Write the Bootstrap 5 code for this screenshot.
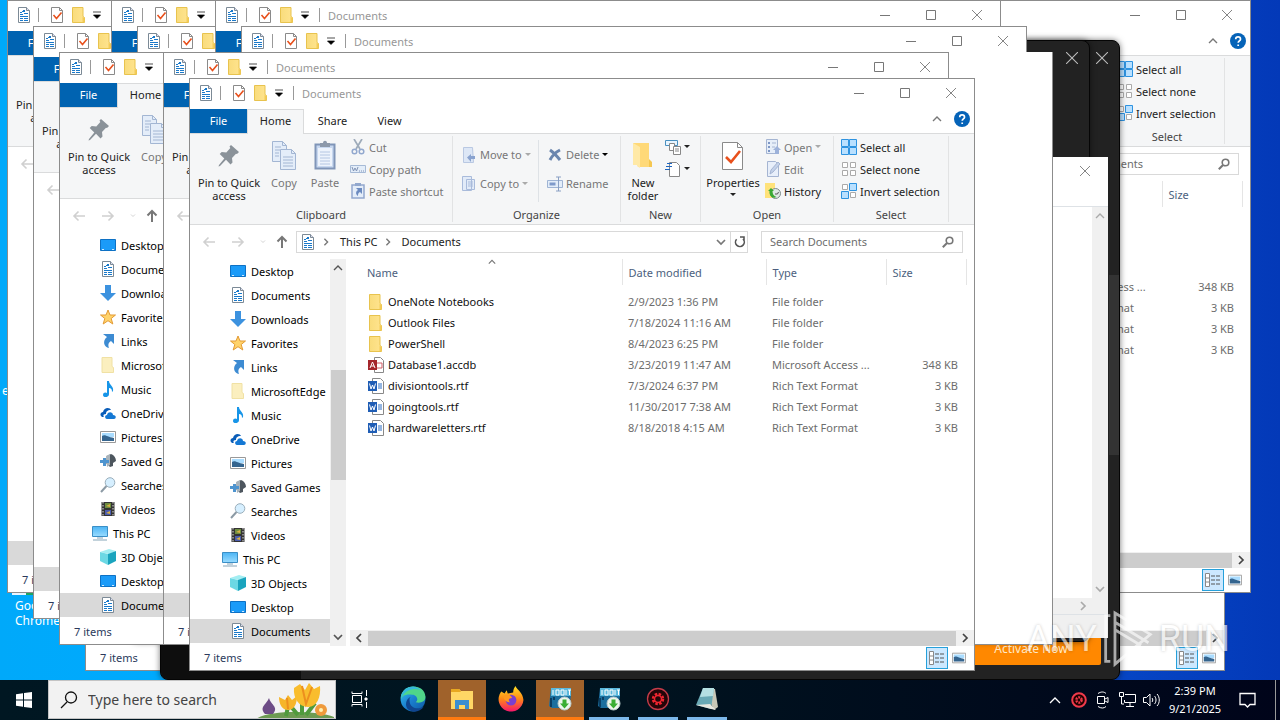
<!DOCTYPE html>
<html lang="en">
<head>
<meta charset="utf-8">
<meta name="viewport" content="width=device-width, initial-scale=1">
<title>Desktop</title>
<link href="https://cdn.jsdelivr.net/npm/bootstrap@5.3.0/dist/css/bootstrap.min.css" rel="stylesheet">
<style>
body{font-family:"Noto Sans","Open Sans",sans-serif;font-size:11px;line-height:13px;color:#222;height:100vh;background:#000}
button,input{font:inherit;color:inherit;background:none;border:0;padding:0}
svg{display:block;flex:none}
.desk{background:linear-gradient(90deg,#00a9fa 0,#00aaff 15%,#0645c4 88%,#0339b8 100%)}
.win{position:absolute;background:#fff;border:1px solid #8c8c8c}
.explorer{width:786px;height:593px}
.s16{width:16px;height:16px}.s32{width:32px;height:32px}
.titlebar{height:30px;color:#979797;padding:0 0 2px 8px}
.vbar{width:1px;height:14px;background:#999}
.qat{gap:6px}
.winbtn{width:46px;height:28px;display:flex;align-items:center;justify-content:center;color:#777}
.tabs{height:24px}
.tabs button{width:57px;height:24px;padding-bottom:2px}
.tabs .file{background:#0063b1;color:#fff;width:57px}
.tabs .home{background:#f5f6f7;border:1px solid #dadbdc;border-bottom:0;height:25px;position:relative}
.ribbon{background:#f5f6f7;border-top:1px solid #dadbdc;border-bottom:1px solid #dadbdc;height:92px}
.grp{border-right:1px solid #e2e3e4;margin:2px 0 3px;height:86px;display:flex;flex-direction:column;justify-content:space-between}
.grp .cap{text-align:center;color:#444;height:14px}
.grp .acts{height:66px}
.big{display:flex;flex-direction:column;align-items:center;padding-top:4px;height:66px;white-space:nowrap}
.big svg{margin-bottom:4px}
.line{display:flex;align-items:center;gap:3px;height:22px;white-space:nowrap}
.tall .line{height:29px}
.dim{color:#777}
.g1{width:263px}.g2{width:168px}.g3{width:80px}.g4{width:133px}.g5{width:115px}
.g5 .acts{padding-left:7px}
.navrow{height:33px;color:#777}
.back{margin-left:12px}
.fwd,.recent{margin-left:15px}
.upb{margin-left:10px}
.box{border:1px solid #d9d9d9;height:22px;color:#222}
.addr{width:435px;gap:6px;padding-left:3px}
.refresh{width:17px;padding-left:3px}
.search{width:202px;margin-right:11px}
.search input{width:160px;outline:0}
.search input::placeholder{color:#6d6d6d;opacity:1}
.below{height:388px;padding-top:1px}
.tree{width:140px;list-style:none;margin:0;padding:0;color:#000;overflow:hidden;white-space:nowrap}
.tree li{height:24px;padding-left:40px;display:flex;align-items:center}
.tree li.root{padding-left:32px}
.tree li.on{background:#d9d9d9}
.tree span{display:flex;gap:5px;align-items:center}
.vs{width:16px;background:#f0f0f0;color:#555}
.vs .thumb{background:#cdcdcd;height:110px;margin-top:94px;width:15px}
.files{table-layout:fixed;width:620px;border-collapse:collapse;white-space:nowrap;color:#6d6d6d}
.files th{font-weight:400;color:#4c5f7e;height:26px;border-right:1px solid #e5e5e5;padding:0 0 0 6px}
.files td{height:21px;padding:0 0 0 6px}
.files td:first-child,.files th:first-child{padding-left:21px}
.files td:first-child{color:#111}
.files td:first-child span{gap:4px;padding-left:1px}
.files tbody:before{content:"";display:block;height:6px}
.files td:last-child{text-align:right;padding-right:8px}
.sortmark{left:141px;top:-1px}
.hs{height:16px;background:#f0f0f0;color:#444}
.hs .thumb{background:#cdcdcd;height:15px}
.status{height:23px;color:#2b3a5c;padding-left:14px}
.views button{width:22px;height:22px;display:flex;align-items:center;justify-content:center}
.views .on{background:#cce8ff;border:1px solid #26a0da}
.dark{position:absolute;background:#222;border:1px solid #050505;border-radius:8px;box-shadow:0 0 6px #0008;overflow:hidden}
.dark .shut{color:#bbb;padding:11px 11px 0 0}
.activate{background:#f80;color:#ffe9c8;font-size:12px;line-height:16px;height:28px;width:140px;border-radius:2px;padding-bottom:8px;margin:0 18px 14px}
.note{background:#fff;color:#999}
.note .vs,.note .hs{color:#aaa}
.deskicon{position:absolute;color:#fff;text-align:center;font-size:12px;line-height:15px}
.mark-logo{position:absolute;right:50px;bottom:9px;color:#fff;opacity:.62;font:36px/60px "Liberation Sans Narrow","Roboto",sans-serif;display:flex;align-items:center;text-shadow:0 0 3px #0005;pointer-events:none}
.bar{height:40px;background:linear-gradient(90deg,#001722,#00131f 50%,#00041a);color:#fff}
.bar button{height:40px;display:flex;align-items:center;justify-content:center}
.start{width:48px}
.find{width:288px;height:39px;background:#f2f2f2;border:1px solid #c4c4c4;color:#333;padding-left:11px;gap:10px;overflow:hidden}
.find input{width:158px;font-size:14px;outline:0;flex:none}
.find input::placeholder{color:#444;opacity:1}
.app{width:48px;margin-right:1px;border-bottom:3px solid transparent!important}
.app.hot{background:#a0622b;border-color:#ff7a10!important}
.app.run{width:40px;margin:0 5px 0 4px;border-color:#7cb8ea!important}
.tray button{width:24px}
.clock{font-size:11px;line-height:18px;width:64px;text-align:center}
</style>
</head>
<body class="d-flex flex-column overflow-hidden">
<svg width="0" height="0" class="position-absolute" aria-hidden="true">
<defs>
<linearGradient id="gf" x2="1"><stop stop-color="#f9dc7c"/><stop offset="1" stop-color="#ffe48f"/></linearGradient>
<linearGradient id="gs" x2="0" y2="1"><stop stop-color="#4cb5f5"/><stop offset="1" stop-color="#9adcff"/></linearGradient>
<linearGradient id="ge" x2="1" y2="1"><stop stop-color="#35c1f1"/><stop offset=".5" stop-color="#1b80d0"/><stop offset="1" stop-color="#0c59a4"/></linearGradient>
<linearGradient id="gx" x2="0" y2="1"><stop stop-color="#ffe226"/><stop offset=".5" stop-color="#ff8a16"/><stop offset="1" stop-color="#f5156c"/></linearGradient>
</defs>
<symbol id="doc" viewBox="0 0 16 16"><path d="M2.500.5h8l3 3v12h-11z" fill="#fff" stroke="#7c8a96"/><path d="M10.500.5v3h3" fill="#dde" stroke="#7c8a96"/><path d="M4 5.500h2M7 3.500h2M6 4.500h3M4 7.500h3M8 6.500h4M4 9.500h8M4 11.500h3M8 11.500h4M4 13.500h3M8 13.500h4" stroke="#1979ca"/></symbol>
<symbol id="chk" viewBox="0 0 16 16"><path d="M2.500.5h8l3 3v12h-11z" fill="#fff" stroke="#8a8a8a"/><path d="M10.500.5v3h3" fill="none" stroke="#8a8a8a"/><path d="M4.500 8l3 3.500 5-6" fill="none" stroke="#e8501c" stroke-width="1.600"/></symbol>
<symbol id="prop" viewBox="0 0 32 32"><path d="M5.500 2.500h15l5 5v22h-20z" fill="#fff" stroke="#8a8a8a"/><path d="M20.500 2.500v5h5" fill="none" stroke="#8a8a8a"/><path d="M9 17l5 5 9-11" fill="none" stroke="#e8501c" stroke-width="2.600"/></symbol>
<symbol id="fold" viewBox="0 0 16 16"><path d="M1.500.5h10.500v9l1.500 1v5h-12z" fill="url(#gf)" stroke="#e8c34e"/><path d="M11.500 15v-5l2 1v4z" fill="#f3cb57"/></symbol>
<symbol id="pale" viewBox="0 0 16 16"><path d="M2 .5h10v9l1.500 1v5H2z" fill="#fbefbf" stroke="#f0e1a4"/></symbol>
<symbol id="qcar" viewBox="0 0 8 8"><path d="M0 1h8M0.500 4h7l-3.500 3.500z" fill="#000" stroke="#000" stroke-width=".7"/></symbol>
<symbol id="car" viewBox="0 0 6 4"><path d="M0 0h6L3 3z" fill="currentColor"/></symbol>
<symbol id="min" viewBox="0 0 10 10"><path d="M0 5.500h10" stroke="currentColor"/></symbol>
<symbol id="max" viewBox="0 0 10 10"><path d="M.5.5h9v9h-9z" fill="none" stroke="currentColor"/></symbol>
<symbol id="x" viewBox="0 0 10 10"><path d="M0 0l10 10M10 0L0 10" stroke="currentColor" stroke-width=".9"/></symbol>
<symbol id="up" viewBox="0 0 10 10"><path d="M1 7l4-4 4 4" fill="none" stroke="currentColor" stroke-width="1.400"/></symbol>
<symbol id="dn" viewBox="0 0 10 10"><path d="M1 3l4 4 4-4" fill="none" stroke="currentColor" stroke-width="1.700"/></symbol>
<symbol id="rt" viewBox="0 0 10 10"><path d="M3 1l4 4-4 4" fill="none" stroke="currentColor" stroke-width="1.700"/></symbol>
<symbol id="lf" viewBox="0 0 10 10"><path d="M7 1L3 5l4 4" fill="none" stroke="currentColor" stroke-width="1.700"/></symbol>
<symbol id="help" viewBox="0 0 16 16"><circle cx="8" cy="8" r="8" fill="#0563b8"/><path d="M5.700 6.200c0-3 4.800-3 4.800 0 0 1.700-2.300 1.800-2.300 3.600M8.200 11.500v1.500" fill="none" stroke="#fff" stroke-width="1.700"/></symbol>
<symbol id="pin" viewBox="0 0 32 32"><path d="M18 5l8 7-2 2-1-.3-4 4.300.5 4.500-2 2-4.500-4.800L7 26l-1.500.5L6 25l5.300-6.500L6.700 14l2-2 4.600.5 4-4.500-.8-1.500z" fill="#8a9299"/></symbol>
<symbol id="copy" viewBox="0 0 32 32"><g fill="#e4edf9" stroke="#a3b6d3"><path d="M4.500 1.500h10l4 4v16h-14z"/><path d="M12.500 9.500h11l4 4v16h-15z"/></g><path d="M14.500 1.500v4h4M23.500 9.500v4h4M7 7h6M7 10h5M7 13h4M7 16h4M15 17h10M15 20h10M15 23h10M15 26h10" stroke="#a3b6d3" fill="none"/></symbol>
<symbol id="paste" viewBox="0 0 32 32"><path d="M6.500 4.500h19v24h-19z" fill="#c8d8f0" stroke="#8095b8" stroke-width="2"/><path d="M9 8h14v18H9z" fill="#edf3fc"/><path d="M11 3h3c0-3 4-3 4 0h3v4H11z" fill="#8d99aa"/><path d="M11 12h10M11 15h10M11 18h10M11 21h10M11 24h10" stroke="#b4c6e2"/></symbol>
<symbol id="cut" viewBox="0 0 16 16"><path d="M4 0l6 10M12 0L6 10" stroke="#9eabba" stroke-width="1.700"/><circle cx="4.500" cy="12.500" r="2.300" fill="none" stroke="#92a8ce" stroke-width="1.500"/><circle cx="11.500" cy="12.500" r="2.300" fill="none" stroke="#92a8ce" stroke-width="1.500"/></symbol>
<symbol id="path" viewBox="0 0 16 16"><path d="M.5 4.500h15v7H.5z" fill="#e3edf9" stroke="#a6bad6"/><path d="M2 6l1.500 4L5 7l1.500 3L8 6M9 10h1m1 0h1m1 0h1" stroke="#8193b5" fill="none"/></symbol>
<symbol id="scut" viewBox="0 0 16 16"><path d="M2 2h12v13H2z" fill="#e4edf9" stroke="#92a8ce" stroke-width="1.500"/><path d="M5 0h6v3H5z" fill="#92a8ce"/><path d="M6 5h6v6l-2-2c-2 1-2 2-2 4-3-2-2-5 0-6z" fill="#6c8bc0"/></symbol>
<symbol id="move" viewBox="0 0 16 16"><path d="M2.500.5h9l1 15h-10z" fill="#dde7f6" stroke="#b9c8e2"/><path d="M14 9v3h-4v3l-4-4.500L10 7v2z" fill="#8aa3cf"/></symbol>
<symbol id="cpto" viewBox="0 0 16 16"><path d="M1.500.5h9v14h-9zM5.500 3.500h8v10h-8z" fill="#e2ebf8" stroke="#a9bbdb"/><path d="M7 6h5M7 8h5M7 10h5" stroke="#a9bbdb"/></symbol>
<symbol id="del" viewBox="0 0 16 16"><path d="M3 3c3 2 6 5 10 10M13 3C9 5 5 9 3 13" stroke="#6b86ae" stroke-width="3" fill="none"/></symbol>
<symbol id="ren" viewBox="0 0 16 16"><path d="M.5 4.500h15v7H.5z" fill="#e3edf9" stroke="#9fb4d4"/><path d="M2.500 8h6" stroke="#7f9aca" stroke-width="3"/><path d="M9 1h5M11.500 1v14M9 15h5" stroke="#8aa0c4" fill="none"/></symbol>
<symbol id="nfold" viewBox="0 0 32 32"><path d="M6 3h16v17l3 3v4H11z" fill="#ffd978"/><path d="M6 3l7 4v21l-3-2v-1H6z" fill="#ffe9a6"/><path d="M22 19l3 3v5h-3z" fill="#f5c751"/></symbol>
<symbol id="nitem" viewBox="0 0 16 16"><path d="M.5 1.500h12v5H.5z" fill="#e8f5ff" stroke="#4a90c0"/><path d="M4.500 4.500h5v7h-5z" fill="#fff" stroke="#888"/><path d="M8.500 7.500h7v8h-7zM10 10h4M10 12h4" fill="#fff" stroke="#888"/></symbol>
<symbol id="easy" viewBox="0 0 16 16"><path d="M4.500 1.500h7l3 3v11h-10z" fill="#fff" stroke="#888"/><path d="M2 2.500h5M1 5.500h6M0 8.500h5" stroke="#1f66c0"/></symbol>
<symbol id="opn" viewBox="0 0 16 16"><path d="M1.500.5h11v14h-11z" fill="#e6eef9" stroke="#a5b5d2"/><path d="M4 3v2m0 2v2m0 2v2" stroke="#7e97c5" stroke-width="2"/><path d="M7 4h4M7 8h3" stroke="#a5b5d2"/><path d="M12 7l4 4h-2v4h-4v-4H8z" fill="#9db2da"/></symbol>
<symbol id="edit" viewBox="0 0 16 16"><path d="M2.500.5h8l3 3v12h-11z" fill="#e8effa" stroke="#a5b5d2"/><path d="M5 13l1-4 7-8 2 2-7 8z" fill="#c4d2ea" stroke="#a5b5d2"/></symbol>
<symbol id="hist" viewBox="0 0 16 16"><path d="M0 0h10v15H0z" fill="#ffe27a"/><circle cx="10.500" cy="10.500" r="5" fill="#dfe9e4" stroke="#7d8b8b"/><path d="M10 11h2.500l1-2" stroke="#555" fill="none"/><path d="M3 8l3-3 3 3H7.500c0 3 1 5 4 6-4 2-7.500-1-7-6z" fill="#3ba935"/></symbol>
<symbol id="sall" viewBox="0 0 16 16"><path d="M.5.5h7v7h-7zM8.500.5h7v7h-7zM.5 8.500h7v7h-7zM8.500 8.500h7v7h-7z" fill="#b9e0ff" stroke="#2e93e0"/></symbol>
<symbol id="snone" viewBox="0 0 16 16"><path d="M1.500 1.500h5v5h-5zM9.500 1.500h5v5h-5zM1.500 9.500h5v5h-5zM9.500 9.500h5v5h-5z" fill="#fff" stroke="#aaa"/></symbol>
<symbol id="sinv" viewBox="0 0 16 16"><path d="M1.500 1.500h5v5h-5zM9.500 9.500h5v5h-5z" fill="#fff" stroke="#aaa"/><path d="M8.500.5h7v7h-7zM.5 8.500h7v7h-7z" fill="#b9e0ff" stroke="#2e93e0"/></symbol>
<symbol id="aL" viewBox="0 0 14 12"><path d="M13 6H2M6.500 1.500L2 6l4.500 4.500" fill="none" stroke="currentColor" stroke-width="1.600"/></symbol>
<symbol id="aR" viewBox="0 0 14 12"><path d="M1 6h11M7.500 1.500L12 6l-4.500 4.500" fill="none" stroke="currentColor" stroke-width="1.600"/></symbol>
<symbol id="aU" viewBox="0 0 12 14"><path d="M6 13V2M1.500 6.500L6 2l4.500 4.500" fill="none" stroke="currentColor" stroke-width="2"/></symbol>
<symbol id="ref" viewBox="0 0 12 12"><path d="M2.600 3.200A4.400 4.400 0 1 0 9 3M6 1h4v4" fill="none" stroke="currentColor" stroke-width="1.600"/></symbol>
<symbol id="mag" viewBox="0 0 12 12"><circle cx="7.500" cy="4.500" r="3.300" fill="none" stroke="currentColor" stroke-width="1.600"/><path d="M5 7L.8 11.200" stroke="currentColor" stroke-width="2"/></symbol>
<symbol id="desktop" viewBox="0 0 16 16"><path d="M.5 2.500h15v11H.5z" fill="#1b9bf8" stroke="#0e71c4"/><path d="M2 12.500h2M12 12.500h2" stroke="#cfeaff"/></symbol>
<symbol id="down" viewBox="0 0 16 16"><path d="M5 0h6v8h5l-8 8-8-8h5z" fill="#3c92df"/></symbol>
<symbol id="star" viewBox="0 0 16 16"><path d="M8 1l2 5h5.500l-4.300 3.500 1.600 5.500L8 11.700 3.200 15l1.600-5.500L.5 6H6z" fill="#ffd36b" stroke="#e39a34"/></symbol>
<symbol id="link" viewBox="0 0 16 16"><path d="M3 1h11v10l-3-3c-3 2-3 4-2 7-5-1-7-7-2-11z" fill="#3d8bd2"/></symbol>
<symbol id="music" viewBox="0 0 16 16"><path d="M7 0h2c0 4 5 5 4 10l-1 1c0-3-1-4-3-4v6c0 4-6 4-6 1s3-3 4-2z" fill="#1795e8"/></symbol>
<symbol id="cloud" viewBox="0 0 16 16"><path d="M2 12c-3-2-1-5 1-5 1-5 7-5 8-2-4 0-5 2-5 4-3 0-3 2-2 3z" fill="#0a5db8"/><path d="M7 14c-3-1-2-4 0-4 1-4 6-3 6 0 4 0 3 4 1 4z" fill="#1478d4"/></symbol>
<symbol id="pic" viewBox="0 0 16 16"><path d="M.5 2.500h15v11H.5z" fill="#fff" stroke="#999"/><path d="M2 4h12v4H2z" fill="#a9dcff"/><path d="M2 7c3-2 5 1 12 2v3H2z" fill="#35658f"/></symbol>
<symbol id="games" viewBox="0 0 16 16"><path d="M7 3l4-2c3 1 5 4 5 7l-3 2v3l-3 1-4-4z" fill="#4d565e"/><path d="M6 3l4-2v11l-3 2z" fill="#a9b3ba"/><path d="M3 5h3v2h3v3H6v3H3v-3H0V7h3z" fill="#4e94cf"/></symbol>
<symbol id="srch" viewBox="0 0 16 16"><circle cx="10" cy="5.500" r="4.800" fill="#d6efff" stroke="#9aaebb"/><path d="M6.500 9L1 15" stroke="#8c9aa5" stroke-width="2"/></symbol>
<symbol id="vid" viewBox="0 0 16 16"><path d="M1.500 1h13v14h-13z" fill="#333"/><path d="M5 2h6v5H5z" fill="#6d8c3f"/><path d="M5 9h6v5H5z" fill="#4a5cae"/><path d="M3 1v14M13 1v14" stroke="#ddd" stroke-dasharray="1.500 1.500"/><path d="M6 5l4-2v3zM6 12l4-2v3z" fill="#d9b040"/></symbol>
<symbol id="pc" viewBox="0 0 16 16"><path d="M.5 1.500h15v10H.5z" fill="url(#gs)" stroke="#3b8fc6"/><path d="M5 13h6M1 15h14" stroke="#86a5b8"/></symbol>
<symbol id="cube" viewBox="0 0 16 16"><path d="M0 3l9-3 7 2-7 3z" fill="#a3eef2"/><path d="M0 3l8 2v11l-8-4z" fill="#6cd8e4"/><path d="M8 5l8-3v10l-8 4z" fill="#1aa4be"/></symbol>
<symbol id="acc" viewBox="0 0 16 16"><path d="M6.500.5h6l3 3v12h-9z" fill="#fff" stroke="#888"/><path d="M9 6h5v5H9" fill="none" stroke="#d05a65"/><path d="M0 3h9v10H0z" fill="#a4262c"/><path d="M2 11l2.500-6L7 11M3 9h3" stroke="#fff" fill="none"/></symbol>
<symbol id="wrd" viewBox="0 0 16 16"><path d="M4.500.5h8l3 3v12h-11z" fill="#fff" stroke="#888"/><path d="M10 6h4M10 8h4M10 10h4" stroke="#2b6cc4"/><path d="M0 3h9v10H0z" fill="#1f5db5"/><path d="M1.500 5.500L3 11l1.500-4L6 11l1.500-5.500" stroke="#fff" fill="none"/></symbol>
<symbol id="vdet" viewBox="0 0 16 14"><path d="M.5.5h4v13h-4zM.5 5h4M.5 9h4" fill="#fff" stroke="#888"/><path d="M6 3h4m1 0h4M6 7h4m1 0h4M6 11h4m1 0h4" stroke="#555"/></symbol>
<symbol id="iobit" viewBox="0 0 24 24"><path d="M3 1h20v8l-2 12H4L1 19z" fill="#1c6f9e"/><path d="M3 1h20v8H3z" fill="#5bb8dc"/><path d="M5 3v5M8 3h3v5H8zM13 3h3v5h-3zM18 3v5M20 3h3M21.500 3v5" stroke="#fff" fill="none"/><path d="M3 11v9M6 10v3" stroke="#0b3e63" stroke-width="2"/><circle cx="16.500" cy="16.500" r="6.500" fill="#eef6ee" stroke="#bcc"/><path d="M14.500 12.500h4v4h2.500l-4.500 5-4.500-5h2.500z" fill="#3aae34"/></symbol>
</svg>

<main class="desk position-relative flex-grow-1 overflow-hidden" id="desk">
<div class="deskicon" style="left:2px;top:383px">e</div>
<div class="deskicon" style="left:15px;top:598px"><span class="d-block text-start">Goo</span>Chrome</div>
<svg class="position-absolute" style="left:12px;top:586px" width="24" height="9"><path d="M0 4h14v5H0z" fill="#e8f4ff"/><path d="M14 4h10v5H14z" fill="#1da462"/></svg>
</main>

<footer class="bar d-flex">
<button class="start" aria-label="Start"><svg width="16" height="16"><path d="M0 2.200l7-1v6.300H0zM8 1l8-1v7.500H8zM0 8.500h7v6.300l-7-1zM8 8.500h8V16l-8-1z" fill="#fff"/></svg></button>
<label class="find d-flex align-items-center"><svg width="18" height="18"><circle cx="11" cy="6.500" r="5.500" fill="none" stroke="#111" stroke-width="1.300"/><path d="M7 11L1 17" stroke="#111" stroke-width="1.300"/></svg><input type="search" placeholder="Type here to search" aria-label="Type here to search">
<svg width="78" height="38" viewBox="0 0 78 38"><path d="M0 38c12-9 60-9 78-2v2z" fill="#6d9b52"/><path d="M46 34V18M30 35l3-14M50 34l9-12M42 34l-10-12" stroke="#4f9a3d" stroke-width="4" fill="none"/><path d="M9 33c-6-7 1-9 4-16 2 7 10 9 4 16z" fill="#6d4c86"/><path d="M23 16l6 3 3-5 4 5 5-4c0 8-3 14-9 14s-9-6-9-13z" fill="#f6b52a"/><path d="M38 7l6-4 5 6 4-7 5 6 6-3c1 11-3 21-12 21S37 17 38 7z" fill="#f9bd2d"/><path d="M46 5l4 18 6-17M31 17l1 11" stroke="#ed8f1e" stroke-width="2" fill="none"/><circle cx="65" cy="29" r="6" fill="#ef9a3c"/><circle cx="65" cy="29" r="2" fill="#fff0b0"/></svg></label>
<button class="app" aria-label="Task view"><svg width="18" height="18" fill="none" stroke="#fff"><path d="M1 1.500v2h10v-2M1 16.500v-2h10v2M1.500 5.500h9v7h-9zM15.500 0v6M15.500 12v6"/><path d="M14 8h2v2h-2z" fill="#fff"/></svg></button>
<button class="app ms-1" aria-label="Microsoft Edge"><svg width="26" height="26" viewBox="0 0 24 24"><circle cx="12" cy="12" r="11.500" fill="url(#ge)"/><path d="M1 9C4-3 23-2 23.500 10c0 5-5 6-9 5 3-2 1-7-3-7S4 7 1 12z" fill="#4fd58a"/><path d="M1 9c3-10 14-10 18-5C12 1 4 4 1 12z" fill="#35b8dc"/><path d="M9 15c1 6 8 7 13 4-3 5-10 6-14 3s-3-10 2-12c-2 2-1 3-1 5z" fill="#10458f"/></svg></button>
<button class="app hot" aria-label="File Explorer"><svg width="24" height="22"><path d="M1 1h8l2 2h12v18H1z" fill="#ffd765"/><path d="M1 1h8l2 3H1z" fill="#e8a820"/><path d="M5 12h14v9h-4v-4H9v4H5z" fill="#3c8fd0"/></svg></button>
<button class="app" aria-label="Firefox"><svg width="26" height="26" viewBox="0 0 24 24"><path d="M3 5l3 2 2-3 1 3 5-1c0-3 1-4 2-6 2 4 7 6 7.500 13A11.500 11.500 0 1 1 3 5z" fill="url(#gx)"/><circle cx="12" cy="13" r="5" fill="#7a3fd0"/><path d="M5 9c4-2 7-1 8 2-3 0-4 2-2 4-4 0-6-3-6-6z" fill="#ff9a1e"/></svg></button>
<button class="app hot" aria-label="IObit installer"><svg width="24" height="24"><use href="#iobit"/></svg></button>
<button class="app run" aria-label="IObit"><svg width="24" height="24"><use href="#iobit"/></svg></button>
<button class="app run" aria-label="Advanced tool"><svg width="24" height="24"><circle cx="12" cy="12" r="10.500" fill="#240508" stroke="#c33b48" stroke-width="1.300"/><circle cx="12" cy="12" r="5" fill="none" stroke="#f02530" stroke-width="2.500" stroke-dasharray="2.500 1.430"/><circle cx="12" cy="12" r="3.500" fill="none" stroke="#f02530" stroke-width="1.500"/></svg></button>
<button class="app run" aria-label="Notepad"><svg width="24" height="24"><path d="M8 1l12 1 3 18-4 3z" fill="#c8c8b8"/><path d="M8 1h11l-3 21-15-4z" fill="#69a9b5"/><path d="M8 1h11l-1 8-13 1z" fill="#b5dfe2"/><path d="M1 18l15 4 5 1-6-6z" fill="#e8e8e0"/></svg></button>
<div class="tray d-flex align-items-center ms-auto">
<button aria-label="Show hidden icons"><svg width="12" height="8" fill="none" stroke="#fff" stroke-width="1.300"><path d="M1 7l5-5 5 5"/></svg></button>
<button aria-label="Protection"><svg width="16" height="16"><circle cx="8" cy="8" r="6.800" fill="#200" stroke="#f13a4b" stroke-width="2"/><circle cx="8" cy="8" r="2.600" fill="none" stroke="#f13a4b" stroke-width="2.500" stroke-dasharray="1.800 1"/></svg></button>
<button aria-label="Camera"><svg width="14" height="18" fill="none" stroke="#fff"><path d="M1.500 5.500h7v7h-7zM9 8l3-1.500v5L9 10M2 2.500c3-2 6-2 8 0M2 15.500c3 2 6 2 8 0"/></svg></button>
<button aria-label="Network"><svg width="17" height="16" fill="none" stroke="#fff"><path d="M6 2.500h10.500v8h-11V8M11 11v3M7 14.500h8M.5.5h4v4h-4zM2.500 5v7H5"/></svg></button>
<button aria-label="Volume"><svg width="17" height="16" fill="none" stroke="#fff"><path d="M.5 5.500h3L7 2v12l-3.500-3.500h-3zM9 6c1 1 1 3 0 4M11.500 4c2 2 2 6 0 8M14 2c3 3 3 9 0 12"/></svg></button>
<div class="clock">2:39 PM<br>9/21/2025</div>
<button aria-label="Notifications" class="mx-2"><svg width="17" height="17" fill="none" stroke="#fff" stroke-width="1.300"><path d="M1 1.500h15v11h-5L8.500 15 6 12.500H1z"/></svg></button>
<div class="vbar ms-2 me-1 h-100"></div>
</div>
</footer>

<template id="explorer">
<header class="titlebar d-flex align-items-center">
<div class="qat d-flex align-items-center" data-part="qat"><svg class="s16"><use href="#doc"/></svg><i class="vbar"></i><svg class="s16 ms-1"><use href="#chk"/></svg><svg class="s16"><use href="#fold"/></svg><svg width="8" height="8"><use href="#qcar"/></svg><i class="vbar ms-1 me-2"></i></div>
<span data-part="title">Documents</span>
<div class="ms-auto d-flex" data-part="ctl"><button class="winbtn" aria-label="Minimize"><svg width="10" height="10"><use href="#min"/></svg></button><button class="winbtn" aria-label="Maximize"><svg width="10" height="10"><use href="#max"/></svg></button><button class="winbtn" aria-label="Close"><svg width="10" height="10"><use href="#x"/></svg></button></div>
</header>
<nav class="tabs d-flex align-items-center"><button class="file" data-part="file">File</button><button class="home" data-part="home">Home</button><button data-part="tabs">Share</button><button data-part="tabs">View</button>
<div class="d-flex align-items-center gap-2 ms-auto me-1 mb-1 dim" data-part="help"><svg width="10" height="10" class="me-1"><use href="#up"/></svg><svg class="s16"><use href="#help"/></svg></div></nav>
<div class="ribbon d-flex">
<div class="grp g1"><div class="acts d-flex">
<button class="big" style="width:78px" data-part="pin"><svg class="s32"><use href="#pin"/></svg>Pin to Quick<br>access</button>
<button class="big dim" style="width:32px" data-part="copy"><svg class="s32"><use href="#copy"/></svg>Copy</button>
<button class="big dim" style="width:50px" data-part="clip"><svg class="s32"><use href="#paste"/></svg>Paste</button>
<div class="dim" data-part="clip"><button class="line"><svg class="s16"><use href="#cut"/></svg>Cut</button><button class="line"><svg class="s16"><use href="#path"/></svg>Copy path</button><button class="line"><svg class="s16"><use href="#scut"/></svg>Paste shortcut</button></div>
</div><div class="cap" data-part="clip">Clipboard</div></div>
<div class="grp g2" data-part="org"><div class="acts d-flex tall pt-1 dim">
<div class="ps-2 border-end pe-1" style="width:86px"><button class="line"><svg class="s16"><use href="#move"/></svg>Move to<svg width="6" height="4" color="#aaa"><use href="#car"/></svg></button><button class="line"><svg class="s16"><use href="#cpto"/></svg>Copy to<svg width="6" height="4" color="#aaa"><use href="#car"/></svg></button></div>
<div class="ps-2"><button class="line"><svg class="s16"><use href="#del"/></svg>Delete<svg width="6" height="4" color="#000"><use href="#car"/></svg></button><button class="line"><svg class="s16"><use href="#ren"/></svg>Rename</button></div>
</div><div class="cap">Organize</div></div>
<div class="grp g3" data-part="new"><div class="acts d-flex"><button class="big" style="width:44px"><svg class="s32"><use href="#nfold"/></svg>New<br>folder</button>
<div><button class="line" aria-label="New item"><svg class="s16"><use href="#nitem"/></svg><svg width="6" height="4"><use href="#car"/></svg></button><button class="line" aria-label="Easy access"><svg class="s16"><use href="#easy"/></svg><svg width="6" height="4"><use href="#car"/></svg></button></div></div><div class="cap">New</div></div>
<div class="grp g4" data-part="open"><div class="acts d-flex"><button class="big" style="width:64px"><svg class="s32"><use href="#prop"/></svg>Properties<svg width="6" height="4" class="mt-1"><use href="#car"/></svg></button>
<div><button class="line dim"><svg class="s16"><use href="#opn"/></svg>Open<svg width="6" height="4" color="#aaa"><use href="#car"/></svg></button><button class="line dim"><svg class="s16"><use href="#edit"/></svg>Edit</button><button class="line"><svg class="s16"><use href="#hist"/></svg>History</button></div></div><div class="cap">Open</div></div>
<div class="grp g5" data-part="select"><div class="acts"><button class="line"><svg class="s16"><use href="#sall"/></svg>Select all</button><button class="line"><svg class="s16"><use href="#snone"/></svg>Select none</button><button class="line"><svg class="s16"><use href="#sinv"/></svg>Invert selection</button></div><div class="cap">Select</div></div>
</div>
<div class="navrow d-flex align-items-center">
<div class="d-flex align-items-center" data-part="nav" style="width:106px"><svg width="14" height="12" color="#d0d0d0" class="back"><use href="#aL"/></svg><svg width="14" height="12" color="#d0d0d0" class="fwd"><use href="#aR"/></svg><svg width="6" height="5" color="#ccc" class="recent"><use href="#dn"/></svg><svg width="12" height="14" class="upb"><use href="#aU"/></svg></div>
<div class="box addr d-flex align-items-center" data-part="addr"><svg class="s16"><use href="#doc"/></svg><svg width="8" height="8" class="dim"><use href="#rt"/></svg><span class="ps-1">This PC</span><svg width="8" height="8" class="dim"><use href="#rt"/></svg><span class="ps-1">Documents</span><svg width="10" height="10" class="ms-auto me-1 dim"><use href="#dn"/></svg></div>
<button class="box refresh border-start-0" aria-label="Refresh" data-part="addr"><svg width="12" height="12" color="#555"><use href="#ref"/></svg></button>
<label class="box search d-flex align-items-center ps-2 ms-auto" data-part="search"><input type="text" placeholder="Search Documents" aria-label="Search Documents"><svg width="12" height="12" class="ms-auto me-2 dim"><use href="#mag"/></svg></label>
</div>
<div class="d-flex below">
<ul class="tree"></ul>
<div class="vs d-flex flex-column align-items-center"><svg width="10" height="10" class="mt-1" style="margin-bottom:3px"><use href="#up"/></svg><div class="thumb"></div><svg width="10" height="10" class="mt-auto mb-1"><use href="#dn"/></svg></div>
<div class="flex-grow-1 d-flex flex-column position-relative">
<svg width="10" height="8" class="position-absolute dim sortmark"><use href="#up"/></svg>
<table class="files"><colgroup><col style="width:276px"><col style="width:144px"><col style="width:120px"><col style="width:80px"></colgroup><thead><tr><th data-part="name">Name</th><th data-part="name">Date modified</th><th data-part="meta">Type</th><th data-part="meta">Size</th></tr></thead><tbody></tbody></table>
<div class="hs d-flex align-items-center mt-auto ms-1"><svg width="10" height="10" class="mx-1"><use href="#lf"/></svg><div class="thumb flex-grow-1"></div><svg width="10" height="10" class="mx-1"><use href="#rt"/></svg></div>
</div></div>
<div class="status d-flex align-items-center"><span data-part="items">7 items</span><div class="views d-flex ms-auto me-1" data-part="views"><button class="on" aria-label="Details"><svg width="16" height="14"><use href="#vdet"/></svg></button><button aria-label="Large icons"><svg width="14" height="14"><use href="#pic"/></svg></button></div></div>
</template>

<script>
const desk = document.getElementById('desk');
const places = [['desktop','Desktop'],['doc','Documents'],['down','Downloads'],['star','Favorites'],['link','Links'],['pale','MicrosoftEdge'],['music','Music'],['cloud','OneDrive'],['pic','Pictures'],['games','Saved Games'],['srch','Searches'],['vid','Videos'],['pc','This PC','root'],['cube','3D Objects'],['desktop','Desktop'],['doc','Documents','on']];
const files = [['fold','OneNote Notebooks','2/9/2023 1:36 PM','File folder',''],['fold','Outlook Files','7/18/2024 11:16 AM','File folder',''],['fold','PowerShell','8/4/2023 6:25 PM','File folder',''],['acc','Database1.accdb','3/23/2019 11:47 AM','Microsoft Access ...','348 KB'],['wrd','divisiontools.rtf','7/3/2024 6:37 PM','Rich Text Format','3 KB'],['wrd','goingtools.rtf','11/30/2017 7:38 AM','Rich Text Format','3 KB'],['wrd','hardwareletters.rtf','8/18/2018 4:15 AM','Rich Text Format','3 KB']];
const tpl = document.getElementById('explorer').content;
tpl.querySelector('.tree').innerHTML = places.map(([i,t,c='']) => `<li class="${c}"><span data-part="tree"><svg class="s16"><use href="#${i}"/></svg>${t}</span></li>`).join('');
tpl.querySelector('tbody').innerHTML = files.map(([i,n,d,t,s]) => `<tr><td data-part="name"><span class="d-flex align-items-center"><svg class="s16"><use href="#${i}"/></svg>${n}</span></td><td data-part="name">${d}</td><td data-part="meta">${t}</td><td data-part="meta">${s}</td></tr>`).join('');

// Open an explorer window; parts lists the pieces that are not covered by other windows.
function explorer(x, y, parts) {
  const w = document.createElement('section');
  w.className = 'win explorer';
  w.style.left = x + 'px'; w.style.top = y + 'px';
  w.append(tpl.cloneNode(true));
  if (parts) w.querySelectorAll('[data-part]').forEach(e => e.classList.toggle('invisible', !parts.split(' ').includes(e.dataset.part)));
  desk.append(w);
}
function pane(cls, x, y, w, h, html) {
  desk.insertAdjacentHTML('beforeend', `<section class="${cls}" style="left:${x}px;top:${y}px;width:${w}px;height:${h}px">${html}</section>`);
}
const ic = (n, s = 10) => `<svg width="${s}" height="${s}"><use href="#${n}"/></svg>`;

explorer(439, 78, 'views');
explorer(465, 0, 'ctl help select search meta views');
explorer(85, 78, 'items');
pane('dark', 160, 40, 960, 640, `<div class="d-flex h-100"><div style="width:140px;background:#0e0e0e"></div><div class="flex-grow-1 d-flex flex-column align-items-end justify-content-between"><button class="shut" aria-label="Close">${ic('x',12)}</button><button class="activate d-flex align-items-end justify-content-center">Activate Now</button></div><div class="position-absolute end-0" style="top:234px;width:10px;height:180px;background:#333"></div></div>`);
pane('dark', 130, 40, 960, 602, `<button class="shut float-end" aria-label="Close">${ic('x',12)}</button>`);
pane('win note border-0 d-flex flex-column', 500, 157, 608, 481, `<div class="d-flex justify-content-end" style="height:49px"><button class="winbtn" aria-label="Close">${ic('x')}</button></div><div class="d-flex flex-grow-1 justify-content-end border-top"><div class="vs d-flex flex-column justify-content-between align-items-center py-1">${ic('up')}${ic('dn')}</div></div><div class="hs d-flex justify-content-end align-items-center" style="padding-right:20px">${ic('rt')}</div><div class="hs border-top" style="height:24px"></div>`);
explorer(7, 0, 'qat file pin nav items');
explorer(33, 26, 'qat file pin nav items');
explorer(111, 0, 'qat file');
explorer(137, 26, 'qat');
explorer(215, 0, 'qat title ctl file');
explorer(241, 26, 'qat title ctl');
pane('win border-top-0', 267, 52, 786, 593, '');
explorer(59, 52, 'qat file home pin copy nav tree items');
explorer(163, 52, 'qat title ctl file pin nav items');
explorer(189, 78);
desk.insertAdjacentHTML('beforeend', '<div class="mark-logo"><span>ANY</span><svg width="54" height="64" viewBox="0 0 58 64" fill="none" stroke="#fff" stroke-width="3" class="mx-1"><path d="M10 7H5v49h5M15 4l38 23-38 32zM15 14l36 22M15 22l28 17"/></svg><span>RUN</span></div>');
</script>
<script src="https://cdn.jsdelivr.net/npm/bootstrap@5.3.0/dist/js/bootstrap.bundle.min.js"></script>
</body>
</html>
